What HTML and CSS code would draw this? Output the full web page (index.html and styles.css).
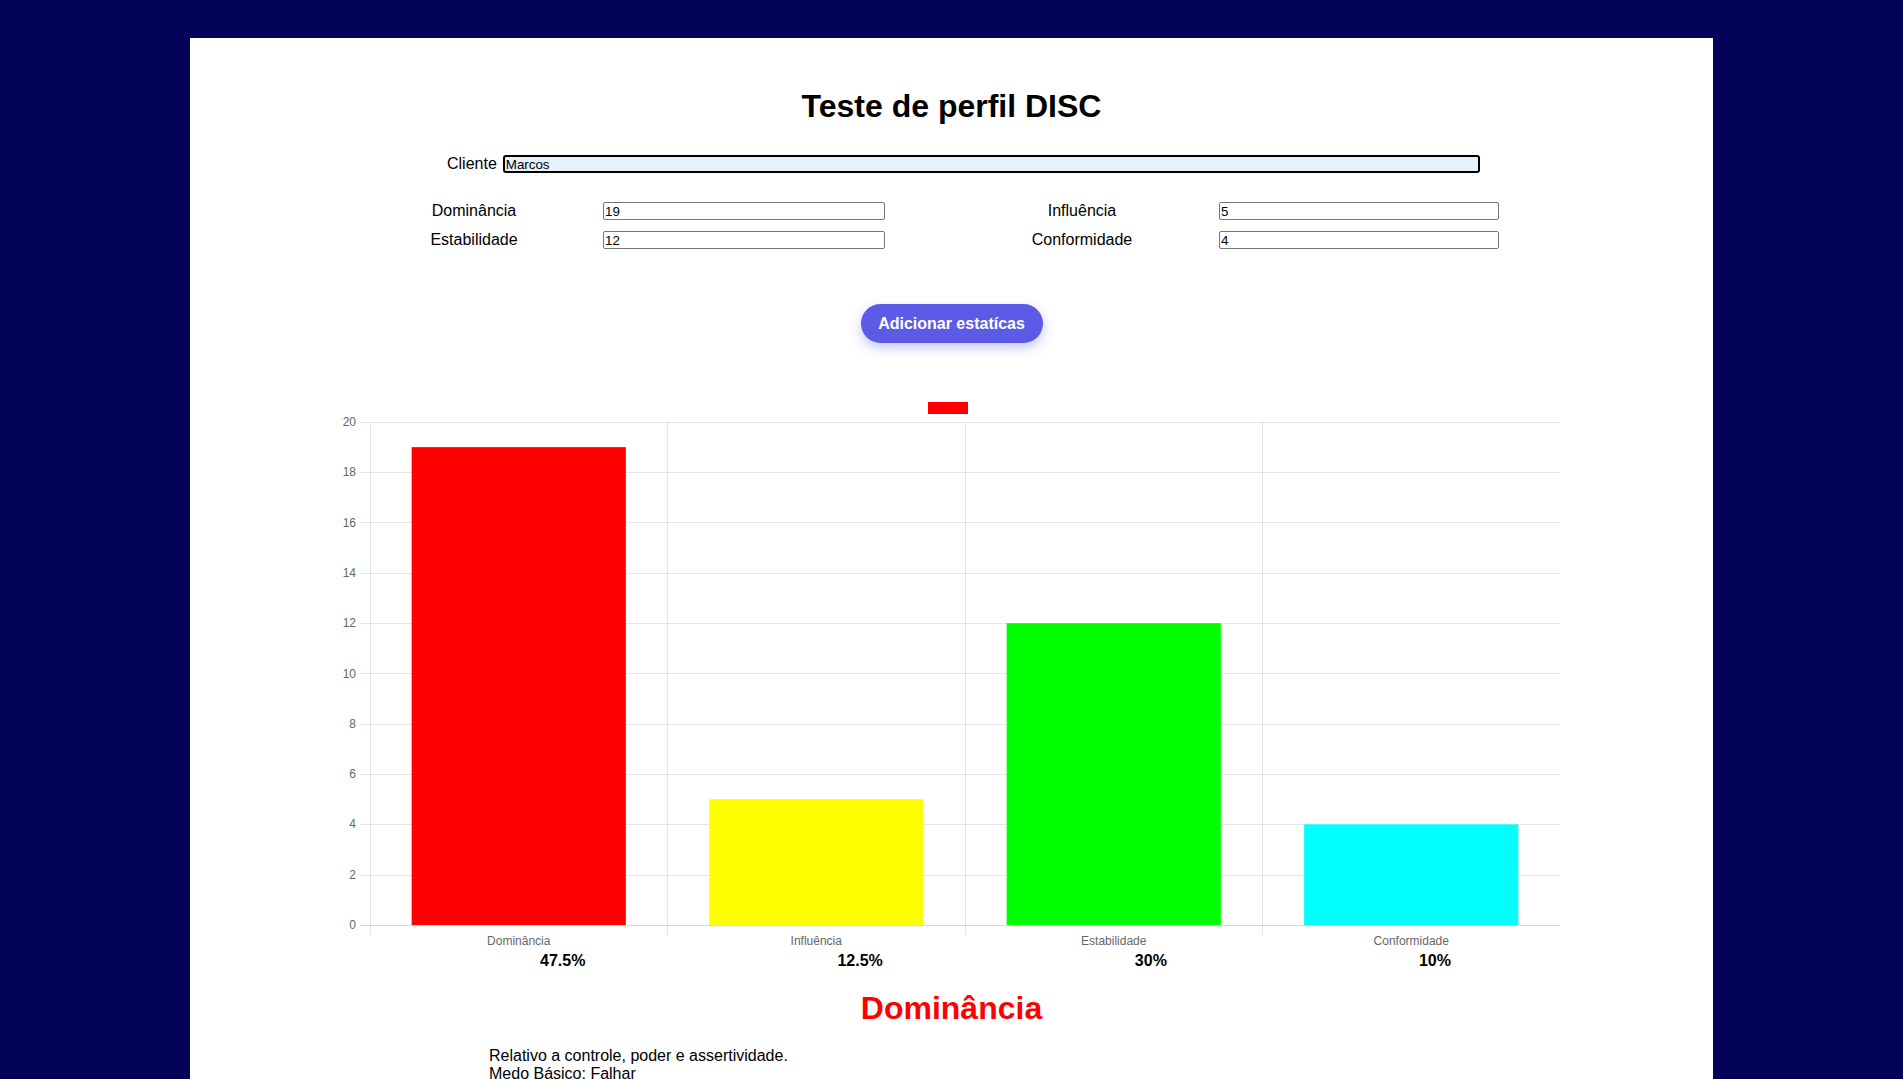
FILE: index.html
```html
<!DOCTYPE html>
<html lang="pt-BR">
<head>
<meta charset="utf-8">
<title>Teste de perfil DISC</title>
<link rel="stylesheet" href="styles.css">
</head>
<body>
<div class="panel">
  <h1 class="title">Teste de perfil DISC</h1>

  <div class="client-row">
    <label class="client-label" for="cliente">Cliente</label>
    <input class="client-input" id="cliente" type="text" value="Marcos">
  </div>

  <div class="fields">
    <label class="field-label">Dominância</label>
    <input class="field-input" type="text" value="19">
    <label class="field-label field-label-right">Influência</label>
    <input class="field-input field-input-right" type="text" value="5">
    <label class="field-label">Estabilidade</label>
    <input class="field-input" type="text" value="12">
    <label class="field-label field-label-right">Conformidade</label>
    <input class="field-input field-input-right" type="text" value="4">
  </div>

  <div class="actions">
    <button class="add-btn" type="button">Adicionar estatícas</button>
  </div>

  <svg class="chart" width="1523" height="560" viewBox="0 0 1523 560" xmlns="http://www.w3.org/2000/svg">
    <rect x="738" y="10" width="40" height="12" fill="#ff0000"/>
    <g stroke="rgba(0,0,0,0.1)" stroke-width="1">
      <line x1="170" y1="30.5" x2="1370" y2="30.5"/>
      <line x1="170" y1="80.5" x2="1370" y2="80.5"/>
      <line x1="170" y1="130.5" x2="1370" y2="130.5"/>
      <line x1="170" y1="181.5" x2="1370" y2="181.5"/>
      <line x1="170" y1="231.5" x2="1370" y2="231.5"/>
      <line x1="170" y1="281.5" x2="1370" y2="281.5"/>
      <line x1="170" y1="332.5" x2="1370" y2="332.5"/>
      <line x1="170" y1="382.5" x2="1370" y2="382.5"/>
      <line x1="170" y1="432.5" x2="1370" y2="432.5"/>
      <line x1="170" y1="483.5" x2="1370" y2="483.5"/>
      <line x1="180.5" y1="30" x2="180.5" y2="543"/>
      <line x1="477.5" y1="30" x2="477.5" y2="543"/>
      <line x1="775.5" y1="30" x2="775.5" y2="543"/>
      <line x1="1072.5" y1="30" x2="1072.5" y2="543"/>
    </g>
    <rect x="221.65" y="55.15" width="214.2" height="477.85" fill="#ff0000"/>
    <rect x="519.15" y="407.25" width="214.2" height="125.75" fill="#ffff00"/>
    <rect x="816.65" y="231.2" width="214.2" height="301.8" fill="#00ff00"/>
    <rect x="1114.15" y="432.4" width="214.2" height="100.6" fill="#00ffff"/>
    <line x1="170" y1="533.5" x2="1370" y2="533.5" stroke="rgba(0,0,0,0.15)" stroke-width="1"/>
    <g class="tick" text-anchor="end">
      <text x="166" y="30">20</text>
      <text x="166" y="80">18</text>
      <text x="166" y="131">16</text>
      <text x="166" y="181">14</text>
      <text x="166" y="231">12</text>
      <text x="166" y="282">10</text>
      <text x="166" y="332">8</text>
      <text x="166" y="382">6</text>
      <text x="166" y="432">4</text>
      <text x="166" y="483">2</text>
      <text x="166" y="533">0</text>
    </g>
    <g class="tick" text-anchor="middle">
      <text x="328.75" y="549">Dominância</text>
      <text x="626.25" y="549">Influência</text>
      <text x="923.75" y="549">Estabilidade</text>
      <text x="1221.25" y="549">Conformidade</text>
    </g>
  </svg>

  <div class="percents">
    <span class="pct">47.5%</span>
    <span class="pct">12.5%</span>
    <span class="pct">30%</span>
    <span class="pct">10%</span>
  </div>

  <h1 class="profile-title">Dominância</h1>

  <div class="profile-text">
    <p class="line">Relativo a controle, poder e assertividade.</p>
    <p class="line">Medo Básico: Falhar</p>
  </div>
</div>
</body>
</html>
```

FILE: styles.css
```css
html, body {
  margin: 0;
  padding: 0;
}

body {
  background: #030359;
  font-family: "Liberation Sans", Arial, sans-serif;
  color: #000;
}

.panel {
  width: 1523px;
  margin: 38px auto 0;
  background: #fff;
  padding: 50px 0 80px;
  box-sizing: border-box;
}

.title {
  margin: 0;
  font-size: 32px;
  line-height: 37px;
  font-weight: bold;
  text-align: center;
}

.client-row {
  display: flex;
  align-items: center;
  gap: 6px;
  margin-top: 30px;
  padding-left: 257px;
  height: 18px;
}

.client-label {
  font-size: 16px;
  line-height: 18px;
}

.client-input {
  width: 977px;
  height: 18px;
  box-sizing: border-box;
  border: 2px solid #000;
  border-radius: 3px;
  background: #e8f0fe;
  padding: 0 1px;
  font-family: "Liberation Sans", Arial, sans-serif;
  font-size: 13.33px;
  color: #000;
  outline: none;
}

.fields {
  display: grid;
  grid-template-columns: 258px 282px 334px 280px;
  row-gap: 11px;
  margin-top: 29px;
  margin-left: 155px;
  align-items: center;
}

.field-label {
  font-size: 16px;
  line-height: 18px;
  text-align: center;
}

.field-label-right {
  padding-left: 60px;
}

.field-input {
  width: 282px;
  height: 18px;
  box-sizing: border-box;
  border: 1px solid #767676;
  border-radius: 2px;
  padding: 0 1px;
  font-family: "Liberation Sans", Arial, sans-serif;
  font-size: 13.33px;
  color: #000;
  background: #fff;
}

.field-input-right {
  width: 280px;
}

.actions {
  display: flex;
  justify-content: center;
  margin-top: 55px;
}

.add-btn {
  width: 182px;
  height: 39px;
  border: none;
  border-radius: 20px;
  background: #5b5be8;
  color: #fff;
  font-family: "Liberation Sans", Arial, sans-serif;
  font-size: 16px;
  font-weight: bold;
  box-shadow: 0 5px 12px rgba(91, 91, 232, 0.35);
  cursor: pointer;
}

.chart {
  display: block;
  margin-top: 49px;
}

.tick {
  font-family: "Liberation Sans", Arial, sans-serif;
  font-size: 12px;
  fill: #666;
  dominant-baseline: central;
}

.percents {
  display: flex;
  justify-content: space-around;
  width: 1163px;
  margin-left: 224px;
  height: 18px;
}

.pct {
  font-size: 16px;
  line-height: 18px;
  font-weight: bold;
}

.profile-title {
  margin: 20px 0 0;
  font-size: 32px;
  line-height: 37px;
  font-weight: bold;
  color: #ff0000;
  text-align: center;
}

.profile-text {
  margin-top: 20px;
  padding-left: 299px;
}

.line {
  margin: 0;
  font-size: 16px;
  line-height: 18px;
}
```
